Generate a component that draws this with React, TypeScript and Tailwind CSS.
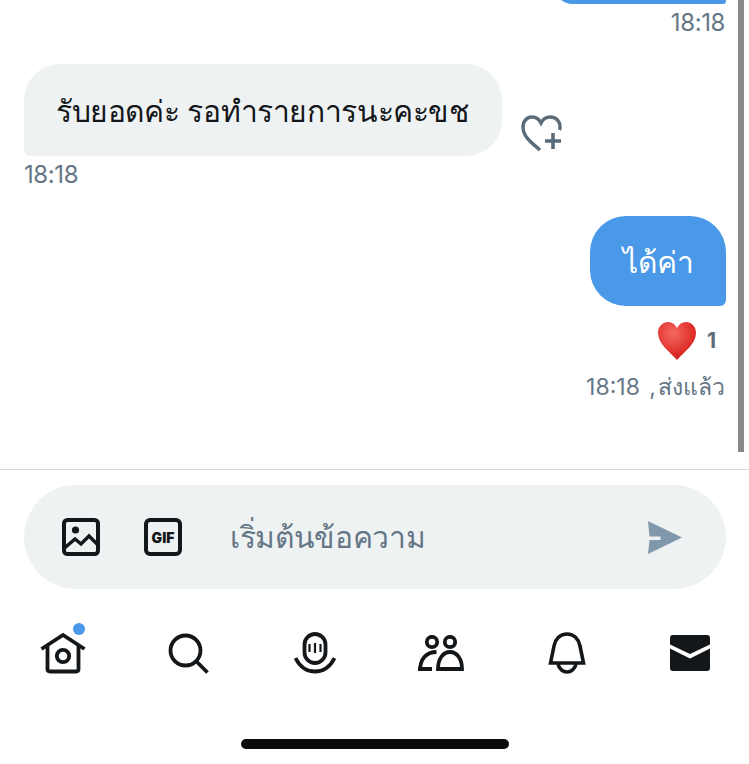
const font = { fontFamily: '"Inter", "Noto Sans", sans-serif' };

function HeartPlus() {
  return (
    <svg width="44" height="40" viewBox="0 0 44 40" fill="none" stroke="#5b6b78" strokeWidth="3.4">
      <path d="M20 36 C12 29 3 23 3 13 C3 7 7 3 12 3 C16 3 19 5 21 9 C23 5 26 3 30 3 C36 3 40 7 40 13 C40 14 40 15 39.6 16" />
      <path d="M33 19 V35 M25 27 H41" strokeWidth="3.6" />
    </svg>
  );
}

function ImageIcon() {
  return (
    <svg width="38" height="38" viewBox="0 0 38 38" fill="none" stroke="#14171a" strokeWidth="4">
      <rect x="2" y="2" width="34" height="34" rx="3.5" />
      <circle cx="13.5" cy="12" r="3.6" fill="#14171a" stroke="none" />
      <path d="M2.5 30 L13 21 L19 26 L27 18 L36 27" strokeLinejoin="miter" strokeWidth="3.4" />
    </svg>
  );
}

function GifIcon() {
  return (
    <div className="flex h-[38px] w-[38px] items-center justify-center rounded-[6px] border-4 border-[#14171a] text-[14px] font-black text-[#14171a]">
      GIF
    </div>
  );
}

function SendIcon() {
  return (
    <svg width="35" height="33" viewBox="0 0 35 33">
      <path d="M0 0 L34 16.5 L0 33 L1.5 19 H12.5 V15.5 H1.5 Z" fill="#8098ab" />
    </svg>
  );
}

function HomeIcon() {
  return (
    <svg width="46" height="42" viewBox="0 0 46 42" fill="none" stroke="#14171a" strokeWidth="3.8">
      <path d="M1.5 17 L23 3 L44.5 17" strokeLinejoin="miter" />
      <path d="M7.5 13 V37 C7.5 38.6 8.4 39.5 10 39.5 H36 C37.6 39.5 38.5 38.6 38.5 37 V13" />
      <circle cx="23" cy="24" r="6.2" />
    </svg>
  );
}

function SearchIcon() {
  return (
    <svg width="41" height="41" viewBox="0 0 41 41" fill="none" stroke="#14171a" strokeWidth="3.8">
      <circle cx="17.5" cy="17.5" r="15" />
      <path d="M28.5 28.5 L39.5 39.5" />
    </svg>
  );
}

function SpacesIcon() {
  return (
    <svg width="42" height="42" viewBox="0 0 42 42" fill="none" stroke="#14171a">
      <rect x="10.5" y="2" width="21" height="29" rx="10.5" strokeWidth="3.8" />
      <path d="M15.5 12 V20 M21 11 V21 M26.5 12 V20" strokeWidth="2.2" />
      <path d="M1.5 26 C6 35 13 39.5 21 39.5 C29 39.5 36 35 40.5 26" strokeWidth="3.8" />
    </svg>
  );
}

function PeopleIcon() {
  return (
    <svg width="46" height="36" viewBox="0 0 46 36" fill="none" stroke="#14171a" strokeWidth="3.8">
      <circle cx="14" cy="7" r="5.2" />
      <circle cx="32" cy="7" r="5.2" />
      <path d="M18.5 17 C8 17 2 24 2 36 M0 34 H14" />
      <path d="M20 34 H44 C44 24 39 17 32 17 C25 17 20 24 20 34 Z" />
    </svg>
  );
}

function BellIcon() {
  return (
    <svg width="38" height="42" viewBox="0 0 38 42" fill="none" stroke="#14171a" strokeWidth="3.6">
      <path d="M2.5 31 L6 14 C7.5 7 12 2 19 2 C26 2 30.5 7 32 14 L35.5 31 Z" strokeLinejoin="miter" />
      <path d="M10 32 C11 37 15 40 19 40 C23 40 27 37 28 32" />
    </svg>
  );
}

function MailIcon() {
  return (
    <svg width="40" height="36" viewBox="0 0 40 36">
      <path d="M3 0 H37 C39 0 40 1 40 3 V9.5 L20 19 L0 9.5 V3 C0 1 1 0 3 0 Z" fill="#14171a" />
      <path d="M0 13.5 L20 23.5 L40 13.5 V33 C40 35 39 36 37 36 H3 C1 36 0 35 0 33 Z" fill="#14171a" />
    </svg>
  );
}

export default function App() {
  return (
    <div className="relative flex h-[764px] w-[749px] flex-col overflow-hidden bg-white" style={font}>
      {/* scrollbar */}
      <div className="absolute right-[5px] top-0 h-[452px] w-[6px] bg-[#888888]" />

      <div className="flex h-[470px] flex-col border-b border-[#d5d7d9] pl-6 pr-[23px] text-[#657786]">
        <div className="flex justify-end">
          <div className="-mt-[36px] h-[40px] w-[173px] rounded-[36px] rounded-br-[6px] bg-[#4a99e9]" />
        </div>
        <div className="mt-1 pr-px text-right text-[24px] leading-[30px] tracking-[-0.4px]">18:18</div>

        <div className="mt-[26px] flex items-end gap-[18px]">
          <div className="flex h-[92px] w-[478px] items-center rounded-[36px] rounded-bl-[6px] bg-[#eff2f3] pl-[32px] pt-[2px] text-[30px] tracking-[-0.38px] text-[#14171a]">
            รับยอดค่ะ รอทำรายการนะคะขช
          </div>
          <div className="mb-[2px]">
            <HeartPlus />
          </div>
        </div>
        <div className="mt-1 text-[24px] leading-[30px] tracking-[-0.4px]">18:18</div>

        <div className="mt-[26px] flex justify-end">
          <div className="flex h-[90px] w-[136px] items-center justify-center rounded-[36px] rounded-br-[6px] bg-[#4a99e9] pt-[3px] text-[30px] text-white">
            ได้ค่า
          </div>
        </div>
        <div className="mt-[15px] flex items-center justify-end gap-[10px] pr-[10px]">
          <svg width="40" height="40" viewBox="0 0 40 40">
            <defs>
              <radialGradient id="hg" cx="0.4" cy="0.3" r="0.8">
                <stop offset="0" stopColor="#f4685f" />
                <stop offset="0.7" stopColor="#dd2c26" />
                <stop offset="1" stopColor="#b5201b" />
              </radialGradient>
            </defs>
            <path d="M20 39 C13 31 1 23 1 12 C1 5 6 1 11 1 C15 1 18 3 20 7 C22 3 25 1 29 1 C34 1 39 5 39 12 C39 23 27 31 20 39 Z" fill="url(#hg)" />
          </svg>
          <span className="text-[21px] font-bold text-[#5b6b78]">1</span>
        </div>
        <div className="mt-[11px] pr-px text-right text-[23px] leading-[30px]">
          18:18 <span className="ml-[3px]">,</span>
          <span className="ml-[2px]">ส่งแล้ว</span>
        </div>
      </div>

      <div className="mx-6 mt-[15px] flex h-[104px] w-[702px] items-center rounded-[52px] bg-[#eff2f3] pl-[38px] pr-[43px]">
        <ImageIcon />
        <div className="ml-[44px]">
          <GifIcon />
        </div>
        <div className="ml-[48px] flex-1 pt-px text-[30px] tracking-[-0.35px] text-[#657786]">เริ่มต้นข้อความ</div>
        <SendIcon />
      </div>

      <div className="ml-10 mt-[43px] flex items-center">
        <div className="relative">
          <HomeIcon />
          <div className="absolute -top-[9px] left-[33px] h-3 w-3 rounded-full bg-[#4a99e9]" />
        </div>
        <div className="ml-[82px]">
          <SearchIcon />
        </div>
        <div className="ml-[85px]">
          <SpacesIcon />
        </div>
        <div className="ml-[82px]">
          <PeopleIcon />
        </div>
        <div className="ml-[84px]">
          <BellIcon />
        </div>
        <div className="ml-[84px]">
          <MailIcon />
        </div>
      </div>

      <div className="mb-[15px] mt-auto flex justify-center">
        <div className="h-[10px] w-[268px] rounded-full bg-[#0a0a0c]" />
      </div>
    </div>
  );
}
